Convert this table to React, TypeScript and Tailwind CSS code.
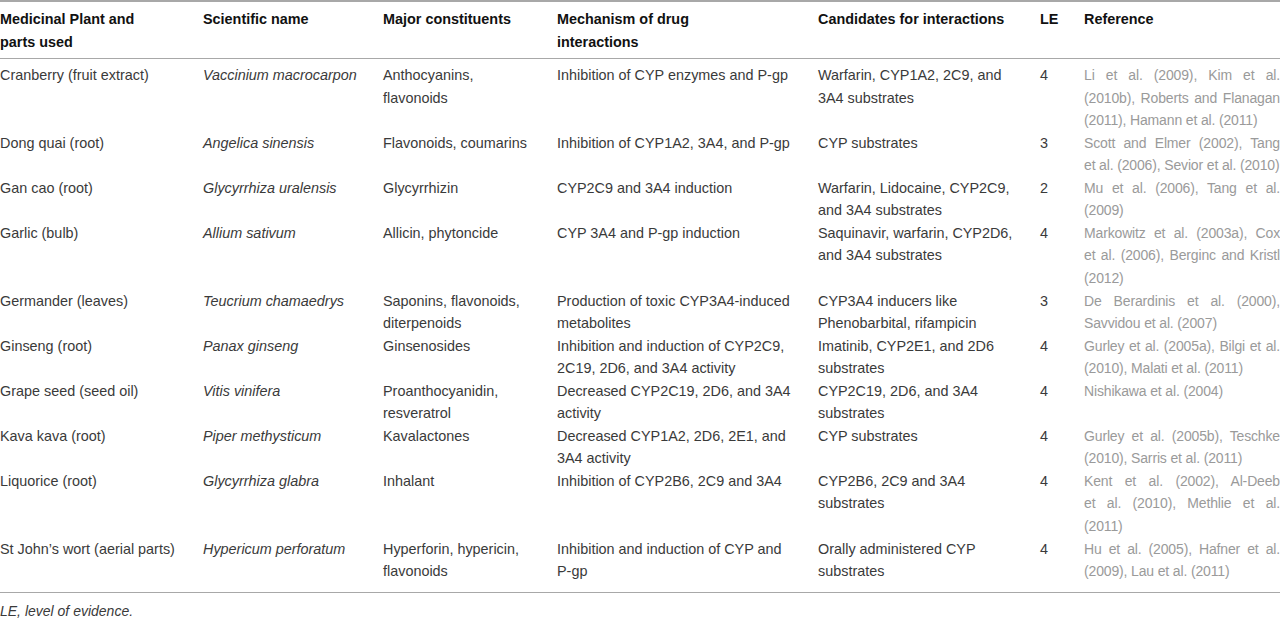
const font = { fontFamily: '"Liberation Sans", Arial, sans-serif' }

interface Row {
  plant: string[]
  sci: string
  constituents: string[]
  mechanism: string[]
  candidates: string[]
  le: string
  refs: string[]
}

const rows: Row[] = [
  {
    plant: ['Cranberry (fruit extract)'],
    sci: 'Vaccinium macrocarpon',
    constituents: ['Anthocyanins,', 'flavonoids'],
    mechanism: ['Inhibition of CYP enzymes and P-gp'],
    candidates: ['Warfarin, CYP1A2, 2C9, and', '3A4 substrates'],
    le: '4',
    refs: ['Li et al. (2009), Kim et al.', '(2010b), Roberts and Flanagan', '(2011), Hamann et al. (2011)'],
  },
  {
    plant: ['Dong quai (root)'],
    sci: 'Angelica sinensis',
    constituents: ['Flavonoids, coumarins'],
    mechanism: ['Inhibition of CYP1A2, 3A4, and P-gp'],
    candidates: ['CYP substrates'],
    le: '3',
    refs: ['Scott and Elmer (2002), Tang', 'et al. (2006), Sevior et al. (2010)'],
  },
  {
    plant: ['Gan cao (root)'],
    sci: 'Glycyrrhiza uralensis',
    constituents: ['Glycyrrhizin'],
    mechanism: ['CYP2C9 and 3A4 induction'],
    candidates: ['Warfarin, Lidocaine, CYP2C9,', 'and 3A4 substrates'],
    le: '2',
    refs: ['Mu et al. (2006), Tang et al.', '(2009)'],
  },
  {
    plant: ['Garlic (bulb)'],
    sci: 'Allium sativum',
    constituents: ['Allicin, phytoncide'],
    mechanism: ['CYP 3A4 and P-gp induction'],
    candidates: ['Saquinavir, warfarin, CYP2D6,', 'and 3A4 substrates'],
    le: '4',
    refs: ['Markowitz et al. (2003a), Cox', 'et al. (2006), Berginc and Kristl', '(2012)'],
  },
  {
    plant: ['Germander (leaves)'],
    sci: 'Teucrium chamaedrys',
    constituents: ['Saponins, flavonoids,', 'diterpenoids'],
    mechanism: ['Production of toxic CYP3A4-induced', 'metabolites'],
    candidates: ['CYP3A4 inducers like', 'Phenobarbital, rifampicin'],
    le: '3',
    refs: ['De Berardinis et al. (2000),', 'Savvidou et al. (2007)'],
  },
  {
    plant: ['Ginseng (root)'],
    sci: 'Panax ginseng',
    constituents: ['Ginsenosides'],
    mechanism: ['Inhibition and induction of CYP2C9,', '2C19, 2D6, and 3A4 activity'],
    candidates: ['Imatinib, CYP2E1, and 2D6', 'substrates'],
    le: '4',
    refs: ['Gurley et al. (2005a), Bilgi et al.', '(2010), Malati et al. (2011)'],
  },
  {
    plant: ['Grape seed (seed oil)'],
    sci: 'Vitis vinifera',
    constituents: ['Proanthocyanidin,', 'resveratrol'],
    mechanism: ['Decreased CYP2C19, 2D6, and 3A4', 'activity'],
    candidates: ['CYP2C19, 2D6, and 3A4', 'substrates'],
    le: '4',
    refs: ['Nishikawa et al. (2004)'],
  },
  {
    plant: ['Kava kava (root)'],
    sci: 'Piper methysticum',
    constituents: ['Kavalactones'],
    mechanism: ['Decreased CYP1A2, 2D6, 2E1, and', '3A4 activity'],
    candidates: ['CYP substrates'],
    le: '4',
    refs: ['Gurley et al. (2005b), Teschke', '(2010), Sarris et al. (2011)'],
  },
  {
    plant: ['Liquorice (root)'],
    sci: 'Glycyrrhiza glabra',
    constituents: ['Inhalant'],
    mechanism: ['Inhibition of CYP2B6, 2C9 and 3A4'],
    candidates: ['CYP2B6, 2C9 and 3A4', 'substrates'],
    le: '4',
    refs: ['Kent et al. (2002), Al-Deeb', 'et al. (2010), Methlie et al.', '(2011)'],
  },
  {
    plant: ['St John\u2019s wort (aerial parts)'],
    sci: 'Hypericum perforatum',
    constituents: ['Hyperforin, hypericin,', 'flavonoids'],
    mechanism: ['Inhibition and induction of CYP and', 'P-gp'],
    candidates: ['Orally administered CYP', 'substrates'],
    le: '4',
    refs: ['Hu et al. (2005), Hafner et al.', '(2009), Lau et al. (2011)'],
  },
]

function Lines({ lines }: { lines: string[] }) {
  return (
    <>
      {lines.map((l, i) => (
        <div key={i} className="whitespace-nowrap">
          {l}
        </div>
      ))}
    </>
  )
}

// reference column is justified, last line of each cell left-aligned
function Refs({ lines }: { lines: string[] }) {
  return (
    <>
      {lines.map((l, i) =>
        i < lines.length - 1 ? (
          <div key={i} className="whitespace-nowrap text-justify [text-align-last:justify]">
            {l}
          </div>
        ) : (
          <div key={i} className="whitespace-nowrap">
            {l}
          </div>
        )
      )}
    </>
  )
}

export default function App() {
  return (
    <div className="w-[1280px] h-[618px] overflow-hidden bg-white" style={font}>
      <table className="w-[1284px] table-fixed border-collapse text-[14.4px] leading-[22.55px] text-[#3a3a3a]">
        <colgroup>
          <col className="w-[203px]" />
          <col className="w-[180px]" />
          <col className="w-[174px]" />
          <col className="w-[261px]" />
          <col className="w-[222px]" />
          <col className="w-[44px]" />
          <col className="w-[200px]" />
        </colgroup>
        <thead>
          <tr className="border-t-2 border-b border-[#a8a8a8] text-left align-top text-[#111]">
            <th className="pt-[6px] pb-[5px] font-bold">
              Medicinal Plant and
              <br />
              parts used
            </th>
            <th className="pt-[6px] font-bold">Scientific name</th>
            <th className="pt-[6px] font-bold">Major constituents</th>
            <th className="pt-[6px] font-bold">
              Mechanism of drug
              <br />
              interactions
            </th>
            <th className="pt-[6px] font-bold">Candidates for interactions</th>
            <th className="pt-[6px] font-bold">LE</th>
            <th className="pt-[6px] font-bold">Reference</th>
          </tr>
        </thead>
        <tbody>
          {rows.map((r, i) => (
            <tr
              key={i}
              className={
                'align-top ' +
                (i === 0 ? '[&>td]:pt-[5px] ' : '') +
                (i === rows.length - 1 ? 'border-b border-[#a8a8a8] [&>td]:pb-[9px]' : '')
              }
            >
              <td>
                <Lines lines={r.plant} />
              </td>
              <td className="italic whitespace-nowrap">{r.sci}</td>
              <td>
                <Lines lines={r.constituents} />
              </td>
              <td>
                <Lines lines={r.mechanism} />
              </td>
              <td>
                <Lines lines={r.candidates} />
              </td>
              <td>{r.le}</td>
              <td className="text-[14px] tracking-[-0.15px] text-[#9a9a9a] pr-[4px]">
                <Refs lines={r.refs} />
              </td>
            </tr>
          ))}
        </tbody>
      </table>
      <div className="pt-[11px] text-[14px] italic leading-[14px] text-[#3a3a3a]">LE, level of evidence.</div>
    </div>
  )
}
